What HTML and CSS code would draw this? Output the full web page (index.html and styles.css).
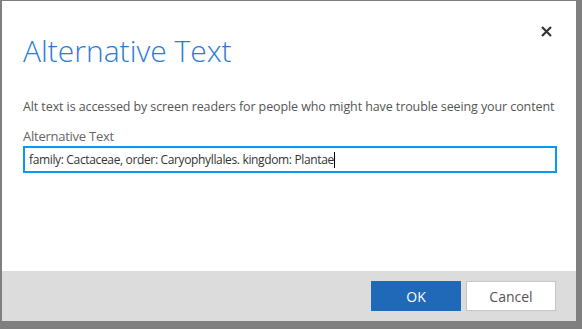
FILE: index.html
```html
<!DOCTYPE html>
<html lang="en">
<head>
<meta charset="utf-8">
<title>Alternative Text</title>
<link rel="stylesheet" href="styles.css">
</head>
<body>
<div class="dialog" role="dialog" aria-labelledby="dlg-title">
  <div class="dialog-body">
    <div class="header">
      <h1 class="title" id="dlg-title">Alternative Text</h1>
      <button class="close" aria-label="Close">
        <svg width="11" height="11" viewBox="0 0 11 11" aria-hidden="true">
          <path d="M1 1 L10 10 M10 1 L1 10" stroke="#333" stroke-width="2.2" stroke-linecap="butt" fill="none"/>
        </svg>
      </button>
    </div>
    <p class="desc">Alt text is accessed by screen readers for people who might have trouble seeing your content</p>
    <label class="label">Alternative Text</label>
    <div class="textbox" role="textbox"><span class="value">family: Cactaceae, order: Caryophyllales. kingdom: Plantae</span><span class="caret"></span></div>
  </div>
  <div class="footer">
    <button class="btn btn-primary">OK</button>
    <button class="btn btn-secondary">Cancel</button>
  </div>
</div>
</body>
</html>
```
FILE: styles.css
```css
html, body {
  margin: 0;
  padding: 0;
}
body {
  background: #7f7f7f;
  width: 582px;
  height: 329px;
  overflow: hidden;
  font-family: "Open Sans", "Noto Sans", "Liberation Sans", sans-serif;
}
.dialog {
  margin: 1px 0 0 2px;
  width: 574px;
  height: 320px;
  display: flex;
  flex-direction: column;
}
.dialog-body {
  flex: 1;
  background: #ffffff;
  padding: 0 19px 0 21px;
  display: flex;
  flex-direction: column;
}
.header {
  display: flex;
  justify-content: space-between;
  align-items: flex-start;
  padding-top: 25px;
}
.title {
  margin: 7px 0 0 0;
  font-weight: 300;
  font-size: 30px;
  line-height: 36px;
  color: #2b7cd6;
}
.close {
  border: 0;
  background: transparent;
  padding: 0;
  margin-right: 5px;
  width: 11px;
  height: 11px;
  display: flex;
  cursor: pointer;
}
.desc {
  margin: 29px 0 0 0;
  font-size: 12.5px;
  line-height: 18px;
  color: #555555;
  letter-spacing: -0.1px;
  white-space: nowrap;
}
.label {
  margin-top: 11px;
  font-size: 13px;
  line-height: 18px;
  color: #666666;
  letter-spacing: -0.25px;
}
.textbox {
  margin-top: 1px;
  width: 534px;
  height: 27px;
  box-sizing: border-box;
  border: 2px solid #0a98f2;
  padding: 0 4px;
  display: flex;
  align-items: center;
  font-size: 12px;
  color: #333333;
  letter-spacing: -0.35px;
  white-space: nowrap;
}
.caret {
  display: inline-block;
  width: 1px;
  height: 16px;
  background: #000;
}
.footer {
  height: 50px;
  background: #dcdcdc;
  box-sizing: border-box;
  padding: 10px 20px 0 0;
  display: flex;
  justify-content: flex-end;
  align-items: flex-start;
  gap: 5px;
}
.btn {
  width: 90px;
  height: 30px;
  font-family: inherit;
  font-size: 14px;
  box-sizing: border-box;
  padding: 0;
  cursor: pointer;
}
.btn-primary {
  background: #2068b8;
  color: #ffffff;
  border: 1px solid #2068b8;
}
.btn-secondary {
  background: #ffffff;
  color: #555555;
  border: 1px solid #c6c6c6;
}
```
